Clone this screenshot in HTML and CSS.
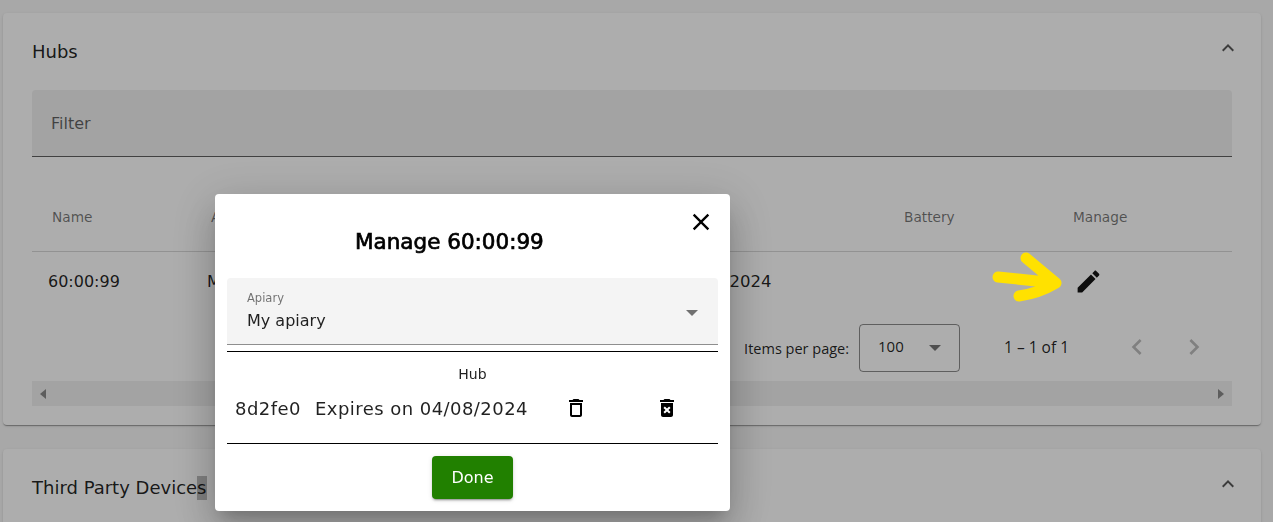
FILE: index.html
```html
<!DOCTYPE html>
<html lang="en">
<head>
<meta charset="utf-8">
<title>Hubs</title>
<link rel="stylesheet" href="styles.css">
</head>
<body>
<main class="page">
  <section class="card card-hubs">
    <header class="card-head">
      <h2 class="card-title">Hubs</h2>
      <svg class="icon chevron" viewBox="0 0 24 24"><path d="M12 8l-6 6 1.41 1.41L12 10.83l4.59 4.58L18 14z"/></svg>
    </header>
    <div class="filter"><span class="filter-label">Filter</span></div>
    <div class="table">
      <div class="grid head-row">
        <span>Name</span><span>Apiary</span><span>Subscription</span><span>Battery</span><span>Manage</span>
      </div>
      <div class="grid body-row">
        <span>60:00:99</span><span>My apiary</span><span class="cell-date">Expires on 04/08/2024</span><span></span>
        <span class="cell-manage"><svg class="icon pencil" viewBox="0 0 24 24"><path d="M3 17.25V21h3.75L17.81 9.94l-3.75-3.75L3 17.25zM20.71 7.04c.39-.39.39-1.02 0-1.41l-2.34-2.34c-.39-.39-1.02-.39-1.41 0l-1.83 1.83 3.75 3.75 1.83-1.83z"/></svg></span>
      </div>
    </div>
    <div class="pager">
      <span class="pager-label">Items per page:</span>
      <div class="pager-select"><span>100</span><i class="caret"></i></div>
      <span class="pager-range">1 – 1 of 1</span>
      <svg class="icon pager-btn" viewBox="0 0 24 24"><path d="M15.41 7.41L14 6l-6 6 6 6 1.41-1.41L10.83 12z"/></svg>
      <svg class="icon pager-btn" viewBox="0 0 24 24"><path d="M10 6L8.59 7.41 13.17 12l-4.58 4.59L10 18l6-6z"/></svg>
    </div>
    <div class="hscroll"><i class="arrow-left"></i><i class="arrow-right"></i></div>
  </section>
  <section class="card card-third">
    <header class="card-head">
      <h2 class="card-title">Third Party Device<span class="selected">s</span></h2>
      <svg class="icon chevron" viewBox="0 0 24 24"><path d="M12 8l-6 6 1.41 1.41L12 10.83l4.59 4.58L18 14z"/></svg>
    </header>
  </section>
</main>

<div class="backdrop"></div>

<svg class="annotation" viewBox="0 0 80 55" fill="none"><path d="M10 27L68 33M38 8L68 33M31 46C45 44 58 39 68 33"/></svg>

<div class="dialog" role="dialog">
  <div class="dialog-head">
    <h1 class="dialog-title">Manage 60:00:99</h1>
    <svg class="icon close" viewBox="0 0 24 24"><path d="M19 6.41L17.59 5 12 10.59 6.41 5 5 6.41 10.59 12 5 17.59 6.41 19 12 13.41 17.59 19 19 17.59 13.41 12z"/></svg>
  </div>
  <div class="field">
    <div class="field-text">
      <span class="field-label">Apiary</span>
      <span class="field-value">My apiary</span>
    </div>
    <i class="caret"></i>
  </div>
  <div class="hub-box">
    <div class="hub-title">Hub</div>
    <div class="hub-row">
      <span class="hub-id">8d2fe0</span>
      <span class="hub-exp">Expires on 04/08/2024</span>
      <svg class="icon trash" viewBox="0 0 24 24"><path d="M6 19c0 1.1.9 2 2 2h8c1.1 0 2-.9 2-2V7H6v12zM8 9h8v10H8V9zm7.5-5l-1-1h-5l-1 1H5v2h14V4h-3.5z"/></svg>
      <svg class="icon trash trash-x" viewBox="0 0 24 24"><path d="M6 19c0 1.1.9 2 2 2h8c1.1 0 2-.9 2-2V7H6v12zm2.46-7.12l1.41-1.41L12 12.59l2.12-2.12 1.41 1.41L13.41 14l2.12 2.12-1.41 1.41L12 15.41l-2.12 2.12-1.41-1.41L10.59 14l-2.13-2.12zM15.5 4l-1-1h-5l-1 1H5v2h14V4z"/></svg>
    </div>
  </div>
  <div class="dialog-actions"><button class="done" type="button">Done</button></div>
</div>
</body>
</html>
```
FILE: styles.css
```css
* { box-sizing: border-box; }
html, body { margin: 0; height: 100%; overflow: hidden; }
body {
  background: #f8f8f8;
  color: rgba(0, 0, 0, .87);
  font-family: "DejaVu Sans", "Noto Sans", sans-serif;
  font-size: 14px;
}
.icon { display: block; fill: currentColor; flex: none; }

.page { padding: 13px 12px 0 3px; display: flex; flex-direction: column; gap: 24px; }
.card {
  background: #fff;
  border-radius: 4px;
  padding: 0 29px;
  box-shadow: 0 2px 1px -1px rgba(0,0,0,.2), 0 1px 1px 0 rgba(0,0,0,.14), 0 1px 3px 0 rgba(0,0,0,.12);
}
.card-hubs { height: 412px; }
.card-third { height: 100px; overflow: hidden; }
.card-head { display: flex; align-items: center; justify-content: space-between; height: 77px; }
.card-title { margin: 0; font-size: 18px; font-weight: 400; line-height: 24px; }
.chevron { width: 24px; height: 24px; margin: -7px -8px 0 0; color: rgba(0,0,0,.65); }
.selected { background: #bcbcbc; display: inline-block; }

.filter {
  height: 67px;
  background: #f0f0f0;
  border-radius: 4px 4px 0 0;
  border-bottom: 1px solid rgba(0,0,0,.6);
  padding: 1px 19px 0;
  display: flex;
  align-items: center;
}
.filter-label { font-size: 16px; color: rgba(0,0,0,.6); }

.table { margin-top: 27px; }
.grid { display: grid; grid-template-columns: 159px 384px 309px 169px 179px; align-items: center; }
.head-row { height: 68px; padding-bottom: 2px; border-bottom: 1px solid #d8d8d8; color: rgba(0,0,0,.54); font-size: 13.7px; }
.head-row span { padding-left: 20px; }
.body-row { height: 60px; padding-bottom: 2px; font-size: 16px; }
.body-row span { padding-left: 16px; }
.body-row .cell-date { white-space: nowrap; font-size: 16.5px; padding-left: 10px; }
.body-row .cell-manage { padding-left: 21px; }
.pencil { width: 29px; height: 29px; color: #141414; }

.pager { display: flex; align-items: center; height: 69px; padding: 3px 22px 0 0; justify-content: flex-end; }
.pager-label { font-family: "Open Sans", sans-serif; font-size: 14.5px; color: rgba(0,0,0,.87); margin-right: 10px; }
.pager-select {
  width: 101px;
  height: 48px;
  border: 1px solid rgba(0,0,0,.45);
  border-radius: 4px;
  padding: 0 18px;
  display: flex;
  align-items: center;
  justify-content: space-between;
  font-family: "Open Sans", sans-serif;
  font-size: 15px;
}
.pager-select span { margin-top: -4px; }
.caret { width: 0; height: 0; border-left: 6px solid transparent; border-right: 6px solid transparent; border-top: 6px solid rgba(0,0,0,.54); display: block; flex: none; }
.pager-range { margin: -2px 52px 0 44px; font-family: "Open Sans", sans-serif; font-size: 15.5px; white-space: nowrap; }
.pager-btn { width: 32px; height: 32px; margin: -2px 0 0 25px; color: rgba(0,0,0,.26); }
.pager-range + .pager-btn { margin-left: 0; }

.hscroll { height: 25px; background: #f0f0f0; display: flex; align-items: center; justify-content: space-between; padding: 0 8px; }
.arrow-left { border-top: 5px solid transparent; border-bottom: 5px solid transparent; border-right: 6px solid #8a8a8a; }
.arrow-right { border-top: 5px solid transparent; border-bottom: 5px solid transparent; border-left: 6px solid #8a8a8a; }

.backdrop { position: fixed; inset: 0; background: rgba(0,0,0,.32); }
.annotation { position: fixed; left: 988px; top: 250px; width: 80px; height: 55px; }
.annotation path { stroke: #ffe100; stroke-width: 11px; stroke-linecap: round; stroke-linejoin: round; }

.dialog {
  position: fixed;
  left: 215px;
  top: 194px;
  width: 515px;
  height: 317px;
  background: #fff;
  border-radius: 4px;
  padding: 0 12px;
  color: #000;
  box-shadow: 0 11px 15px -7px rgba(0,0,0,.2), 0 24px 38px 3px rgba(0,0,0,.14), 0 9px 46px 8px rgba(0,0,0,.12);
}
.dialog-head { height: 84px; display: flex; justify-content: space-between; position: relative; }
.dialog-title { margin: 34px 0 0 128px; font-size: 21.5px; font-weight: 400; -webkit-text-stroke: .7px #000; line-height: 28px; white-space: nowrap; }
.close { width: 28px; height: 28px; margin: 14px 3px 0 0; }

.field {
  height: 67px;
  background: #f4f4f4;
  border-radius: 4px 4px 0 0;
  border-bottom: 1px solid rgba(0,0,0,.42);
  padding: 0 20px;
  display: flex;
  align-items: center;
  justify-content: space-between;
}
.field .caret { margin-top: 3px; }
.field-text { display: flex; flex-direction: column; }
.field-label { font-size: 11.5px; line-height: 16px; color: rgba(0,0,0,.54); }
.field-value { font-size: 16px; line-height: 24px; margin-top: 3px; color: rgba(0,0,0,.87); }

.hub-box { margin-top: 6px; height: 93px; border-top: 1px solid #000; border-bottom: 1px solid #000; }
.hub-title { text-align: center; font-size: 14px; line-height: 20px; margin-top: 12px; color: rgba(0,0,0,.87); }
.hub-row { display: flex; align-items: center; padding-left: 8px; height: 24px; margin-top: 12px; font-size: 18px; letter-spacing: .45px; color: rgba(0,0,0,.87); }
.hub-id { width: 80px; }
.hub-exp { width: 249px; white-space: nowrap; }
.trash { width: 24px; height: 24px; color: #000; }
.trash-x { margin-left: 67px; }

.dialog-actions { display: flex; justify-content: center; margin-top: 12px; }
.done {
  width: 81px;
  height: 43px;
  border: 0;
  border-radius: 4px;
  background: #218000;
  color: #fff;
  font: 400 16px "DejaVu Sans", sans-serif;
  box-shadow: 0 3px 1px -2px rgba(0,0,0,.2), 0 2px 2px 0 rgba(0,0,0,.14), 0 1px 5px 0 rgba(0,0,0,.12);
}
```
